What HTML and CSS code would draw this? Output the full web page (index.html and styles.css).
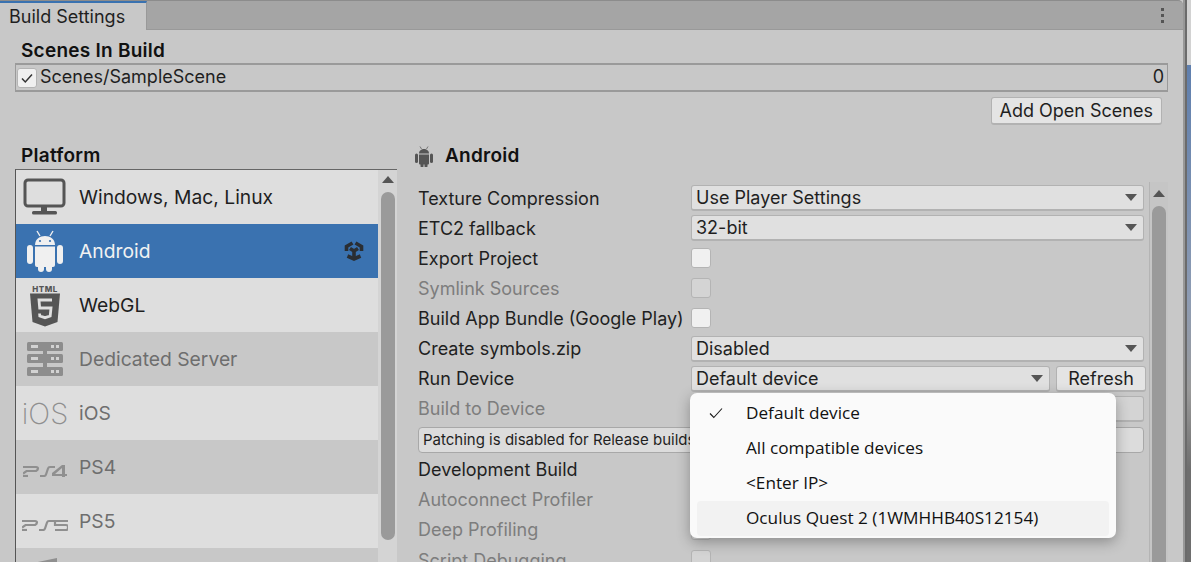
FILE: index.html
```html
<!DOCTYPE html>
<html lang="en">
<head>
<meta charset="UTF-8">
<title>Build Settings</title>
<link rel="stylesheet" href="styles.css">
</head>
<body>
<div class="window">
    <div class="tab-bar">
        <div class="tab">Build Settings</div>
        <div class="tab-menu"><i></i><i></i><i></i></div>
    </div>
    <div class="panel">
        <h2 class="section-title">Scenes In Build</h2>
        <div class="scene-list">
            <span class="check checked">
                <svg viewBox="0 0 12 12" width="12" height="12"><path d="M1 6.500 4.300 10 11 2.500" fill="none" stroke="#333" stroke-width="1.500"/></svg>
            </span>
            <span class="scene-name">Scenes/SampleScene</span>
            <span class="scene-index">0</span>
        </div>
        <div class="scene-actions"><button class="btn">Add Open Scenes</button></div>

        <div class="columns">
            <div class="platform-col">
                <h2 class="section-title">Platform</h2>
                <div class="platform-list">
                    <ul class="platforms">
                        <li class="platform light">
                            <span class="p-icon">
                                <svg viewBox="0 0 44 38" width="44" height="38"><rect x="2" y="2" width="39" height="26" rx="3" fill="none" stroke="#555" stroke-width="3"/><rect x="18" y="28" width="6" height="6" fill="#555"/><rect x="9" y="33" width="25" height="3.500" rx="1.500" fill="#555"/></svg>
                            </span>
                            <span>Windows, Mac, Linux</span>
                        </li>
                        <li class="platform selected">
                            <span class="p-icon">
                                <svg viewBox="0 0 36 42" width="36" height="42"><g fill="#f0f0f0"><path d="M8 15C8 9 13 6 18 6s10 3 10 9Z"/><path d="m10 1 3 5M26 1l-3 5" stroke="#f0f0f0" stroke-width="1.400"/><path d="M8 16.500h20v18.500q0 2-2 2H10q-2 0-2-2Z"/><rect x="0" y="15" width="6" height="19" rx="3"/><rect x="30" y="15" width="6" height="19" rx="3"/><rect x="11" y="34" width="6" height="8" rx="3"/><rect x="19" y="34" width="6" height="8" rx="3"/></g><circle cx="13" cy="11" r="1.100" fill="#3a72b0"/><circle cx="23" cy="11" r="1.100" fill="#3a72b0"/></svg>
                            </span>
                            <span>Android</span>
                            <svg class="unity-mark" viewBox="0 0 20 20" width="20" height="20"><g fill="none" stroke="#2a2e33" stroke-width="3.600"><path d="M8.500 2 2.500 5.500V10"/><path d="M11.500 2 17.500 5.500V10"/><path d="M3.500 15 10 18l6.500-3"/><path d="M6 7.500 10 10l4-2.500M10 10v7"/></g></svg>
                        </li>
                        <li class="platform light">
                            <span class="p-icon">
                                <svg viewBox="0 0 32 43" width="32" height="43"><text x="16" y="7.500" class="html-word">HTML</text><path fill="#555" d="M1 9.500h30l-2.500 28.500L16 42.500 3.500 38Z"/><path fill="none" stroke="#e0e0e0" stroke-width="2.800" d="M23 16H10l.7 8H22l-.8 8-5.200 1.700-5.200-1.700-.2-2.500"/></svg>
                            </span>
                            <span>WebGL</span>
                        </li>
                        <li class="platform dim dark">
                            <span class="p-icon">
                                <svg viewBox="0 0 36 34" width="36" height="34"><g fill="#8d8d8d"><rect y="0" width="36" height="9" rx="1.500"/><rect y="12" width="36" height="9" rx="1.500"/><rect y="25" width="36" height="9" rx="1.500"/><rect x="16" y="9" width="4" height="3"/><rect x="16" y="21" width="4" height="4"/></g><g fill="#d2d2d2"><rect x="4" y="3" width="7" height="3"/><rect x="4" y="15" width="7" height="3"/><rect x="4" y="28" width="7" height="3"/><rect x="24" y="3" width="3" height="3"/><rect x="29" y="3" width="3" height="3"/><rect x="24" y="15" width="3" height="3"/><rect x="29" y="15" width="3" height="3"/><rect x="24" y="28" width="3" height="3"/><rect x="29" y="28" width="3" height="3"/></g></svg>
                            </span>
                            <span>Dedicated Server</span>
                        </li>
                        <li class="platform dim light">
                            <span class="p-icon ios-word">iOS</span>
                            <span>iOS</span>
                        </li>
                        <li class="platform dim dark">
                            <span class="p-icon ps-icon">
                                <svg viewBox="0 0 44 12" width="44" height="12"><g fill="none" stroke="#8f8f8f" stroke-width="2.200"><path d="M0 2h13q2 0 2 1.500T13 6H3.500L0 8.500"/><path d="M0 11h5"/><path d="M17 11h4q1.500 0 2-1.500l2-6Q25.500 2 27 2h5"/></g><path fill="#8f8f8f" d="M42 0h-3L29 8v3h10v1h3v-1h2V9h-2Zm-3 3v6h-7Z"/></svg>
                            </span>
                            <span>PS4</span>
                        </li>
                        <li class="platform dim light">
                            <span class="p-icon ps-icon">
                                <svg viewBox="0 0 46 12" width="46" height="12"><g fill="none" stroke="#8f8f8f" stroke-width="2.200"><path d="M0 2h13q2 0 2 1.500T13 6H3.500L0 8.500"/><path d="M0 11h5"/><path d="M17 11h4q1.500 0 2-1.500l2-6Q25.500 2 27 2h5"/><path d="M46 2H33v4h11q2 0 2 2v1q0 2-2 2H33"/></g></svg>
                            </span>
                            <span>PS5</span>
                        </li>
                        <li class="platform dim dark">
                            <span class="p-icon">
                                <svg viewBox="0 0 36 34" width="36" height="34"><path fill="#8f8f8f" d="M6 5 30 0v34H6Z"/></svg>
                            </span>
                        </li>
                    </ul>
                    <div class="scrollbar list-scroll">
                        <span class="arrow-up"></span>
                        <span class="thumb"></span>
                    </div>
                </div>
            </div>

            <div class="settings-col">
                <div class="settings-head">
                    <svg viewBox="0 0 36 42" width="18" height="21"><g fill="#555"><path d="M8 15C8 9 13 6 18 6s10 3 10 9Z"/><path d="m10 1 3 5M26 1l-3 5" stroke="#555" stroke-width="1.400"/><path d="M8 17h20v18q0 2-2 2H10q-2 0-2-2Z"/><rect x="0" y="15" width="6" height="19" rx="3"/><rect x="30" y="15" width="6" height="19" rx="3"/><rect x="11" y="34" width="6" height="9" rx="3"/><rect x="19" y="34" width="6" height="9" rx="3"/></g></svg>
                    <h2 class="section-title">Android</h2>
                </div>
                <div class="settings-wrap">
                    <div class="settings">
                        <div class="row">
                            <label>Texture Compression</label>
                            <div class="select"><span>Use Player Settings</span><i class="caret"></i></div>
                        </div>
                        <div class="row">
                            <label>ETC2 fallback</label>
                            <div class="select"><span>32-bit</span><i class="caret"></i></div>
                        </div>
                        <div class="row">
                            <label>Export Project</label>
                            <span class="check"></span>
                        </div>
                        <div class="row off">
                            <label>Symlink Sources</label>
                            <span class="check"></span>
                        </div>
                        <div class="row">
                            <label>Build App Bundle (Google Play)</label>
                            <span class="check"></span>
                        </div>
                        <div class="row">
                            <label>Create symbols.zip</label>
                            <div class="select"><span>Disabled</span><i class="caret"></i></div>
                        </div>
                        <div class="row">
                            <label>Run Device</label>
                            <div class="select"><span>Default device</span><i class="caret"></i></div>
                            <button class="btn refresh">Refresh</button>
                        </div>
                        <div class="row off">
                            <label>Build to Device</label>
                            <div class="select blank"></div>
                        </div>
                        <div class="help-box">Patching is disabled for Release builds.</div>
                        <div class="row">
                            <label>Development Build</label>
                            <span class="check"></span>
                        </div>
                        <div class="row off">
                            <label>Autoconnect Profiler</label>
                            <span class="check"></span>
                        </div>
                        <div class="row off">
                            <label>Deep Profiling</label>
                            <span class="check"></span>
                        </div>
                        <div class="row off">
                            <label>Script Debugging</label>
                            <span class="check"></span>
                        </div>
                    </div>
                    <div class="scrollbar settings-scroll">
                        <span class="arrow-up"></span>
                        <span class="thumb"></span>
                    </div>
                </div>
            </div>
        </div>
    </div>

    <div class="menu">
        <div class="menu-item">
            <svg class="menu-check" viewBox="0 0 14 12" width="14" height="12"><path d="M1 6.500 4.800 10.500 13 1.500" fill="none" stroke="#1a1a1a" stroke-width="1.100"/></svg>
            Default device
        </div>
        <div class="menu-item">All compatible devices</div>
        <div class="menu-item">&lt;Enter IP&gt;</div>
        <div class="menu-item hover">Oculus Quest 2 (1WMHHB40S12154)</div>
    </div>
</div>
<div class="backdrop"></div>
</body>
</html>
```

FILE: styles.css
```css
html, body {
    margin: 0;
    height: 562px;
    overflow: hidden;
    background-color: #6b6b6b;
}
body {
    display: flex;
    font-family: Inter, "Noto Sans", sans-serif;
    font-size: 18px;
    color: #1f1f1f;
}
.window {
    position: relative;
    width: 1183px;
    height: 562px;
    flex: none;
    background-color: #c8c8c8;
    border-right: 2px solid #989898;
    overflow: hidden;
}
.backdrop {
    flex: 1;
    margin-left: 2px;
    background: linear-gradient(#d2d2d2 65px, #5f7fae 65px, #8e9cb3 300px, #9a9a9a 390px, #6e6e6e 470px);
}
.tab-bar {
    display: flex;
    justify-content: space-between;
    height: 28px;
    background-color: #a5a5a5;
    border-top: 1px solid #8c8c8c;
    border-bottom: 1px solid #999;
    border-top-right-radius: 5px;
}
.tab {
    width: 147px;
    box-sizing: border-box;
    margin-bottom: -1px;
    padding: 2px 0 0 9px;
    background-color: #c8c8c8;
    border-top: 2px solid #3a72b0;
    border-right: 1px solid #999;
    line-height: 24px;
}
.tab-menu {
    display: flex;
    flex-direction: column;
    justify-content: center;
    gap: 3px;
    padding-right: 19px;
}
.tab-menu i {
    width: 3px;
    height: 3px;
    background-color: #555;
}
.panel {
    padding: 9px 15px 0 15px;
}
.section-title {
    margin: 0 0 0 6px;
    font-size: 19px;
    font-weight: 600;
    letter-spacing: 0.25px;
    line-height: 24px;
    color: #111;
}
.scene-list {
    display: flex;
    align-items: center;
    height: 29px;
    box-sizing: border-box;
    padding: 0 3px 3px 1px;
    border: 1px solid #9a9a9a;
    border-width: 2px 1px;
    gap: 3px;
}
.check.checked {
    margin-top: 3px;
}
.scene-index {
    margin-left: auto;
}
.scene-actions {
    display: flex;
    justify-content: flex-end;
    margin-top: 5px;
    padding-right: 6px;
}
.btn {
    font-family: inherit;
    font-size: 18px;
    color: #1f1f1f;
    height: 28px;
    padding: 0 8px;
    background-color: #e4e4e4;
    border: 1px solid #b2b2b2;
    border-bottom-width: 2px;
    border-radius: 3px;
}
.check {
    display: flex;
    align-items: center;
    justify-content: center;
    width: 20px;
    height: 20px;
    flex: none;
    box-sizing: border-box;
    background-color: #f0f0f0;
    border: 1px solid #b4b4b4;
    border-radius: 3px;
}
.columns {
    display: flex;
    margin-top: 19px;
}
.platform-col {
    width: 382px;
    flex: none;
}
.platform-list {
    display: flex;
    height: 400px;
    margin-top: 1px;
    border-left: 1px solid #555;
    border-top: 1px solid #666;
}
.platforms {
    list-style: none;
    margin: 0;
    padding: 0;
    width: 362px;
}
.platform {
    display: flex;
    align-items: center;
    height: 54px;
    box-sizing: border-box;
    font-size: 19.300px;
}
.light {
    background-color: #dedede;
}
.dark {
    background-color: #c8c8c8;
}
.selected {
    background-color: #3a72b0;
    color: #f2f2f2;
}
.dim {
    color: #6e6e6e;
}
.p-icon {
    display: flex;
    align-items: center;
    justify-content: center;
    width: 46px;
    flex: none;
    padding-left: 6px;
    margin-right: 11px;
}
.ps-icon {
    padding-top: 8px;
}
.ios-word {
    font-size: 29px;
    font-weight: 200;
    color: #8f8f8f;
}
.html-word {
    font-size: 8px;
    font-weight: 800;
    letter-spacing: 0.5px;
    fill: #555;
    text-anchor: middle;
}
.unity-mark {
    margin-left: auto;
    margin-right: 14px;
}
.scrollbar {
    display: flex;
    flex-direction: column;
    align-items: center;
    width: 19px;
    background-color: #d4d4d4;
    padding-top: 6px;
    box-sizing: border-box;
}
.arrow-up {
    border: 6px solid transparent;
    border-top: 0;
    border-bottom: 7px solid #555;
}
.thumb {
    width: 14px;
    height: 348px;
    margin-top: 9px;
    border-radius: 7px;
    background-color: #9a9a9a;
}
.settings-col {
    flex: 1;
    padding-left: 18px;
}
.settings-head {
    display: flex;
    align-items: center;
    gap: 6px;
    height: 24px;
}
.settings-wrap {
    display: flex;
    margin-top: 15px;
}
.settings {
    flex: 1;
    padding-left: 3px;
}
.row {
    display: flex;
    align-items: center;
    height: 30.100px;
    gap: 3px;
}
.row label {
    width: 270px;
    flex: none;
    white-space: nowrap;
}
.off {
    color: #7d7d7d;
}
.off .check {
    background-color: #d4d4d4;
}
.select {
    flex: 1;
    display: flex;
    align-items: center;
    justify-content: space-between;
    height: 26px;
    box-sizing: border-box;
    padding: 0 6px 0 4px;
    background-color: #e0e0e0;
    border: 1px solid #b2b2b2;
    border-bottom-width: 2px;
    border-radius: 3px;
}
.select.blank {
    background-color: #d4d4d4;
}
.caret {
    border: 6px solid transparent;
    border-bottom: 0;
    border-top: 7px solid #555;
}
.refresh {
    height: 26px;
    width: 90px;
    flex: none;
    padding: 0;
    margin: 0 -2px 0 3px;
}
.help-box {
    height: 26px;
    box-sizing: border-box;
    margin: 3px 0 2px;
    padding-left: 4px;
    font-size: 15px;
    line-height: 24px;
    background-color: #dcdcdc;
    border: 1px solid #a8a8a8;
    border-radius: 4px;
}
.settings-scroll {
    margin: -1px 0 0 5px;
    height: 400px;
    padding-top: 8px;
    background-color: #c5c5c5;
    border-left: 1px solid #b4b4b4;
}
.settings-scroll .thumb {
    height: 380px;
}
.menu {
    position: absolute;
    left: 690px;
    top: 393px;
    width: 426px;
    height: 145px;
    box-sizing: border-box;
    padding: 3px 7px;
    background-color: #fafafa;
    border-radius: 7px;
    box-shadow: 0 4px 14px rgba(0, 0, 0, 0.3);
    font-family: "Open Sans", "Noto Sans", sans-serif;
    font-size: 17.200px;
    color: #111;
}
.menu-item {
    position: relative;
    height: 35px;
    line-height: 34px;
    padding-left: 49px;
    border-radius: 4px;
}
.menu-item.hover {
    background-color: #f2f2f2;
}
.menu-check {
    position: absolute;
    left: 12px;
    top: 11px;
}
```
